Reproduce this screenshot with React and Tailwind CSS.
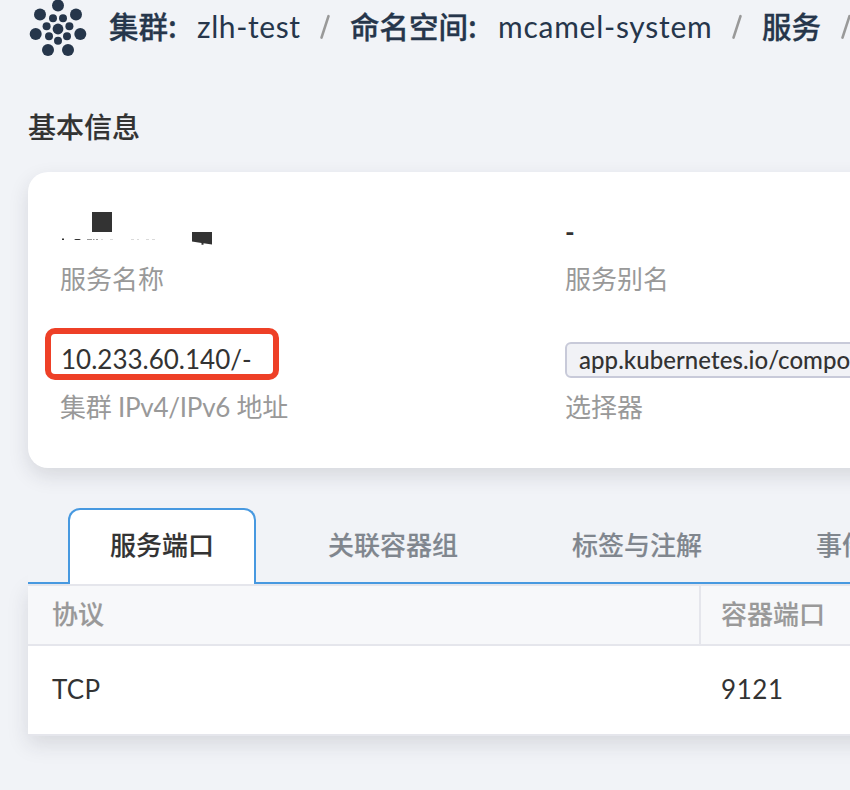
const dots = [
  [38, 5.5, 6], [56, 14.5, 6], [60.3, 34, 6], [48, 50, 6], [28, 50, 6], [15.7, 34, 6], [20, 14.5, 6],
  [38, 29, 5.4],
  [33, 18.2, 4], [43, 18.2, 4], [49.4, 26.2, 4], [47, 36.2, 4], [38, 40.8, 4], [29, 36.2, 4], [26.6, 26.2, 4],
];

function Logo() {
  return (
    <svg className="block h-[60px] w-[80px] shrink-0" viewBox="0 0 80 60" fill="#26364b">
      {dots.map(([x, y, r]) => <circle key={`${x}-${y}`} cx={x} cy={y} r={r} />)}
    </svg>
  );
}

function Slash({ className }) {
  return (
    <svg className={`h-[28px] w-[12px] shrink-0 ${className}`} viewBox="0 0 12 28" stroke="#999999" strokeWidth="2.6" strokeLinecap="round">
      <path d="M9.5 3.2 L2.5 24.6" />
    </svg>
  );
}

function Label({ children }) {
  return <div className="h-[38px] text-[26px] leading-[38px] text-[#999999]">{children}</div>;
}

function Redacted() {
  return (
    <svg className="block h-[50px] w-[170px]" viewBox="60 204 170 50" fill="#333333">
      <rect x="92" y="212" width="20" height="20" />
      <path d="M192 232h20v12.5l-8.5-1.2v1.4h-2v-1.7l-9.5-1.5z" />
      <rect x="62" y="238.5" width="2" height="1.5" />
      <path d="M74 239h7l-1.5 1h-4z" />
      <path d="M87 239h5v1h-5zM93 239h1.5v1H93zM96 239h2v1h-2z" opacity=".5" />
      <path d="M101 239h2v1h-2zM110 239h3v1h-3zM131 239h3v1h-3zM137 239h2v1h-2zM146 239h3v1h-3zM152 239h3v1h-3z" opacity=".18" />
    </svg>
  );
}

export default function App() {
  return (
    <div className="h-[790px] w-[850px] overflow-hidden bg-[#f1f3f7] font-['Lato','Noto_Sans_CJK_SC',sans-serif] whitespace-nowrap text-[#333333]">
      <header className="flex h-[60px] items-start pl-[20px] text-[30px] leading-[51px] text-[#26364b]">
        <Logo />
        <div className="ml-[9px] w-[88px] shrink-0 font-['Noto_Sans_CJK_SC',sans-serif] text-[29.5px] font-medium [-webkit-text-stroke:0.3px_#26364b]">集群:</div>
        <div className="w-[122px] shrink-0 pt-px tracking-[0.6px]">zlh-test</div>
        <Slash className="mt-[13px]" />
        <div className="ml-[19px] w-[148px] shrink-0 font-['Noto_Sans_CJK_SC',sans-serif] text-[29.5px] font-medium [-webkit-text-stroke:0.3px_#26364b]">命名空间:</div>
        <div className="w-[233px] shrink-0 pt-px tracking-[0.75px]">mcamel-system</div>
        <Slash className="mt-[13px]" />
        <div className="ml-[19px] w-[78px] shrink-0 font-['Noto_Sans_CJK_SC',sans-serif] text-[29.5px] font-medium [-webkit-text-stroke:0.3px_#26364b]">服务</div>
        <Slash className="mt-[13px]" />
      </header>

      <h2 className="mt-[47px] ml-[28px] h-[40px] text-[28px] leading-[40px] font-medium [-webkit-text-stroke:0.15px_#333333]">基本信息</h2>

      <section className="mt-[25px] ml-[28px] flex h-[296px] w-[1100px] rounded-[20px] bg-white pt-[32px] pl-[32px] shadow-[0_8px_20px_rgba(40,42,55,0.13)]">
        <div className="w-[505px]">
          <Redacted />
          <div className="mt-[6px]"><Label>服务名称</Label></div>
          <div className="mt-[30px] -ml-[15px] flex h-[52px] w-[234px] items-center rounded-[10px] border-[6px] border-[#ee4027] pt-[9px] pl-[10px] text-[26px] leading-[40px]">
            <span>10.233.60.140/-</span>
          </div>
          <div className="mt-[8px] tracking-[-0.25px]"><Label>集群 IPv4/IPv6 地址</Label></div>
        </div>
        <div>
          <div className="h-[56px] text-[26px] leading-[56px] font-bold">-</div>
          <Label>服务别名</Label>
          <div className="mt-[44px] h-[36px] w-[480px] rounded-[6px] border-2 border-[#c8cad9] bg-[#f1f2f6] pl-[12px] text-[24px] leading-[32px] font-medium tracking-[0.05px]">
            app.kubernetes.io/component
          </div>
          <div className="mt-[10px]"><Label>选择器</Label></div>
        </div>
      </section>

      <section className="mt-[40px] ml-[28px] w-[1100px] text-[26px]">
        <nav className="relative z-10 flex h-[76px] bg-[#f1f3f7] leading-[74px] font-medium text-[#80868e]">
          <div className="w-[40px] border-b-2 border-[#4799e0]" />
          <div className="w-[188px] rounded-t-[12px] border-2 border-b-0 border-[#4799e0] bg-white text-center leading-[70px] text-[#333333] [-webkit-text-stroke:0.15px_#333333]">服务端口</div>
          <div className="w-[244px] border-b-2 border-[#4799e0] pl-[72px] [-webkit-text-stroke:0.15px_#80868e]">关联容器组</div>
          <div className="w-[244px] border-b-2 border-[#4799e0] pl-[72px] [-webkit-text-stroke:0.15px_#80868e]">标签与注解</div>
          <div className="w-[384px] border-b-2 border-[#4799e0] pl-[72px] [-webkit-text-stroke:0.15px_#80868e]">事件</div>
        </nav>
        <div className="bg-white shadow-[0_8px_20px_rgba(40,42,55,0.13)]">
          <div className="flex h-[62px] border-y-2 border-[#e5e6ec] bg-[#f7f8fa] leading-[56px] font-medium text-[#999999] [-webkit-text-stroke:0.15px_#999999]">
            <div className="w-[673px] border-r-2 border-[#e5e6ec] pl-[24px]">协议</div>
            <div className="pl-[20px]">容器端口</div>
          </div>
          <div className="flex h-[90px] border-b-2 border-[#e5e6ec] leading-[86px]">
            <div className="w-[693px] pl-[24px] tracking-[0.3px]">TCP</div>
            <div className="tracking-[0.6px]">9121</div>
          </div>
        </div>
      </section>
    </div>
  );
}
